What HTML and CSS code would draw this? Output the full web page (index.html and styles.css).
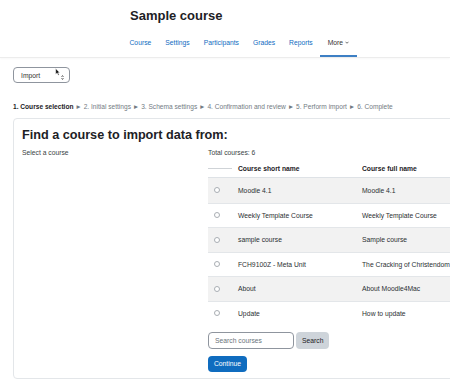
FILE: index.html
```html
<!DOCTYPE html>
<html lang="en">
  <head>
    <meta charset="UTF-8" />
    <meta name="viewport" content="width=device-width, initial-scale=1.0" />
    <title>Import</title>
    <link rel="stylesheet" href="styles.css">
  </head>
  <body>
    <header class="page-header">
      <div class="header-inner">
        <h1 class="course-title">Sample course</h1>
        <nav class="course-nav">
          <a class="nav-link" href="#">Course</a>
          <a class="nav-link" href="#">Settings</a>
          <a class="nav-link" href="#">Participants</a>
          <a class="nav-link" href="#">Grades</a>
          <a class="nav-link" href="#">Reports</a>
          <a class="nav-link active" href="#">More
            <svg class="chev" viewBox="0 0 8 5" width="4" height="3"><path d="M1 1l3 3 3-3" fill="none" stroke="#333" stroke-width="1.4"/></svg>
          </a>
        </nav>
      </div>
    </header>

    <main class="page">
      <div class="select-wrap">
        <div class="import-select">
          <span>Import</span>
          <svg class="select-arrows" viewBox="0 0 6 10" width="3" height="5"><path d="M1 4l2-3 2 3M1 6l2 3 2-3" fill="none" stroke="#333" stroke-width="1.3"/></svg>
        </div>
        <svg class="cursor" viewBox="0 0 10 14" width="6" height="8"><path d="M1 1v10l2.5-2.3 2 4 1.6-.8-2-3.8H8z" fill="#111" stroke="#fff" stroke-width=".8"/></svg>
      </div>

      <p class="steps"><b>1. Course selection</b> ► 2. Initial settings ► 3. Schema settings ► 4. Confirmation and review ► 5. Perform import ► 6. Complete</p>

      <section class="card">
        <h2 class="card-title">Find a course to import data from:</h2>
        <div class="form-row">
          <div class="form-label">Select a course</div>
          <div class="form-field">
            <div class="total">Total courses: 6</div>
            <table class="course-table">
              <thead>
                <tr>
                  <th class="sel"><span class="sel-line"></span></th>
                  <th class="short">Course short name</th>
                  <th>Course full name</th>
                </tr>
              </thead>
              <tbody>
                <tr><td class="sel"><span class="radio"></span></td><td>Moodle 4.1</td><td>Moodle 4.1</td></tr>
                <tr><td class="sel"><span class="radio"></span></td><td>Weekly Template Course</td><td>Weekly Template Course</td></tr>
                <tr><td class="sel"><span class="radio"></span></td><td>sample course</td><td>Sample course</td></tr>
                <tr><td class="sel"><span class="radio"></span></td><td>FCH9100Z - Meta Unit</td><td>The Cracking of Christendom</td></tr>
                <tr><td class="sel"><span class="radio"></span></td><td>About</td><td>About Moodle4Mac</td></tr>
                <tr><td class="sel"><span class="radio"></span></td><td>Update</td><td>How to update</td></tr>
              </tbody>
            </table>
            <div class="search-row">
              <input class="search-input" type="text" placeholder="Search courses">
              <button class="btn btn-secondary">Search</button>
            </div>
            <button class="btn btn-primary">Continue</button>
          </div>
        </div>
      </section>
    </main>
  </body>
</html>
```

FILE: styles.css
```css
body {
  margin: 0;
  width: 450px;
  height: 380px;
  overflow: hidden;
  background: #fff;
  color: #1d2125;
  font-family: "Liberation Sans", Arial, sans-serif;
  font-size: 6.75px;
}
.page-header {
  background: #fff;
  border-bottom: 1px solid #ececec;
  box-shadow: 0 1px 2px rgba(0, 0, 0, 0.03);
}
.header-inner {
  margin-left: 130px;
  padding-top: 8px;
}
.course-title {
  margin: 0;
  font-size: 13px;
  line-height: 16px;
  font-weight: bold;
}
.course-nav {
  display: flex;
  margin-top: 9px;
  margin-left: -7.5px;
}
.nav-link {
  display: flex;
  align-items: center;
  gap: 2px;
  padding: 5px 7px 8px;
  line-height: 9px;
  color: #0f6cbf;
  text-decoration: none;
  border-bottom: 2px solid transparent;
}
.nav-link.active {
  color: #333;
  border-bottom-color: #3d7fc4;
  padding-right: 7.5px;
  padding-left: 8px;
}

.page {
  height: 322px;
  padding: 9px 0 0 13px;
  overflow: hidden;
}
.select-wrap {
  position: relative;
  width: 57px;
}
.import-select {
  display: flex;
  align-items: center;
  justify-content: space-between;
  box-sizing: border-box;
  height: 16px;
  padding: 0 5px 0 7px;
  border: 1px solid #8f959e;
  border-radius: 4px;
  color: #333;
}
.select-arrows {
  margin-top: 4px;
}
.cursor {
  position: absolute;
  left: 42px;
  top: 1px;
}
.steps {
  margin: 20px 0 0;
  line-height: 8px;
  font-size: 6.6px;
  color: #737b83;
  white-space: nowrap;
}
.steps b {
  color: #1d2125;
}

.card {
  width: 470px;
  margin-top: 7px;
  padding: 9px 8px 6px;
  border: 1px solid #e3e6e9;
  border-radius: 4px;
  background: #fff;
}
.card-title {
  margin: 0;
  font-size: 12.65px;
  line-height: 15px;
  font-weight: bold;
}
.form-row {
  display: grid;
  grid-template-columns: 186px 1fr;
  margin-top: 6px;
}
.form-label,
.total {
  line-height: 8px;
  color: #3a3f44;
}
.course-table {
  width: 280px;
  margin-top: 3px;
  border-collapse: collapse;
  table-layout: fixed;
}
.course-table th,
.course-table td {
  padding: 0 6px;
  text-align: left;
  white-space: nowrap;
  overflow: hidden;
}
.course-table th {
  height: 17px;
  border-bottom: 1px solid #dee2e6;
  font-weight: bold;
}
.course-table td {
  height: 24.5px;
  color: #2b2f33;
}
.course-table tbody tr + tr td {
  border-top: 1px solid #e3e6e9;
  height: 23.5px;
}
.course-table tbody tr:nth-child(odd) td {
  background: #f2f2f2;
}
.course-table .sel {
  width: 12px;
}
.course-table .short {
  width: 112px;
}
.sel-line {
  display: block;
  height: 1px;
  margin: 0 -6px;
  background: #cfd3d7;
}
.radio {
  display: block;
  width: 4px;
  height: 4px;
  border: 1px solid #a9aeb3;
  border-radius: 50%;
  background: #fff;
}
.search-row {
  display: flex;
  gap: 2px;
  margin-top: 7px;
}
.search-input {
  box-sizing: border-box;
  width: 86px;
  height: 16.5px;
  padding: 0 6px;
  border: 1px solid #8f959e;
  border-radius: 4px;
  font-family: inherit;
  font-size: 6.75px;
}
.search-input::placeholder {
  color: #6a737b;
}
.btn {
  display: block;
  box-sizing: border-box;
  height: 16.5px;
  padding: 0 6px;
  border: 0;
  border-radius: 4px;
  font-family: inherit;
  font-size: 6.75px;
}
.btn-secondary {
  background: #ced4da;
  color: #1d2125;
}
.btn-primary {
  margin-top: 7px;
  width: 39px;
  padding: 0;
  background: #0f6cbf;
  color: #fff;
}
```
